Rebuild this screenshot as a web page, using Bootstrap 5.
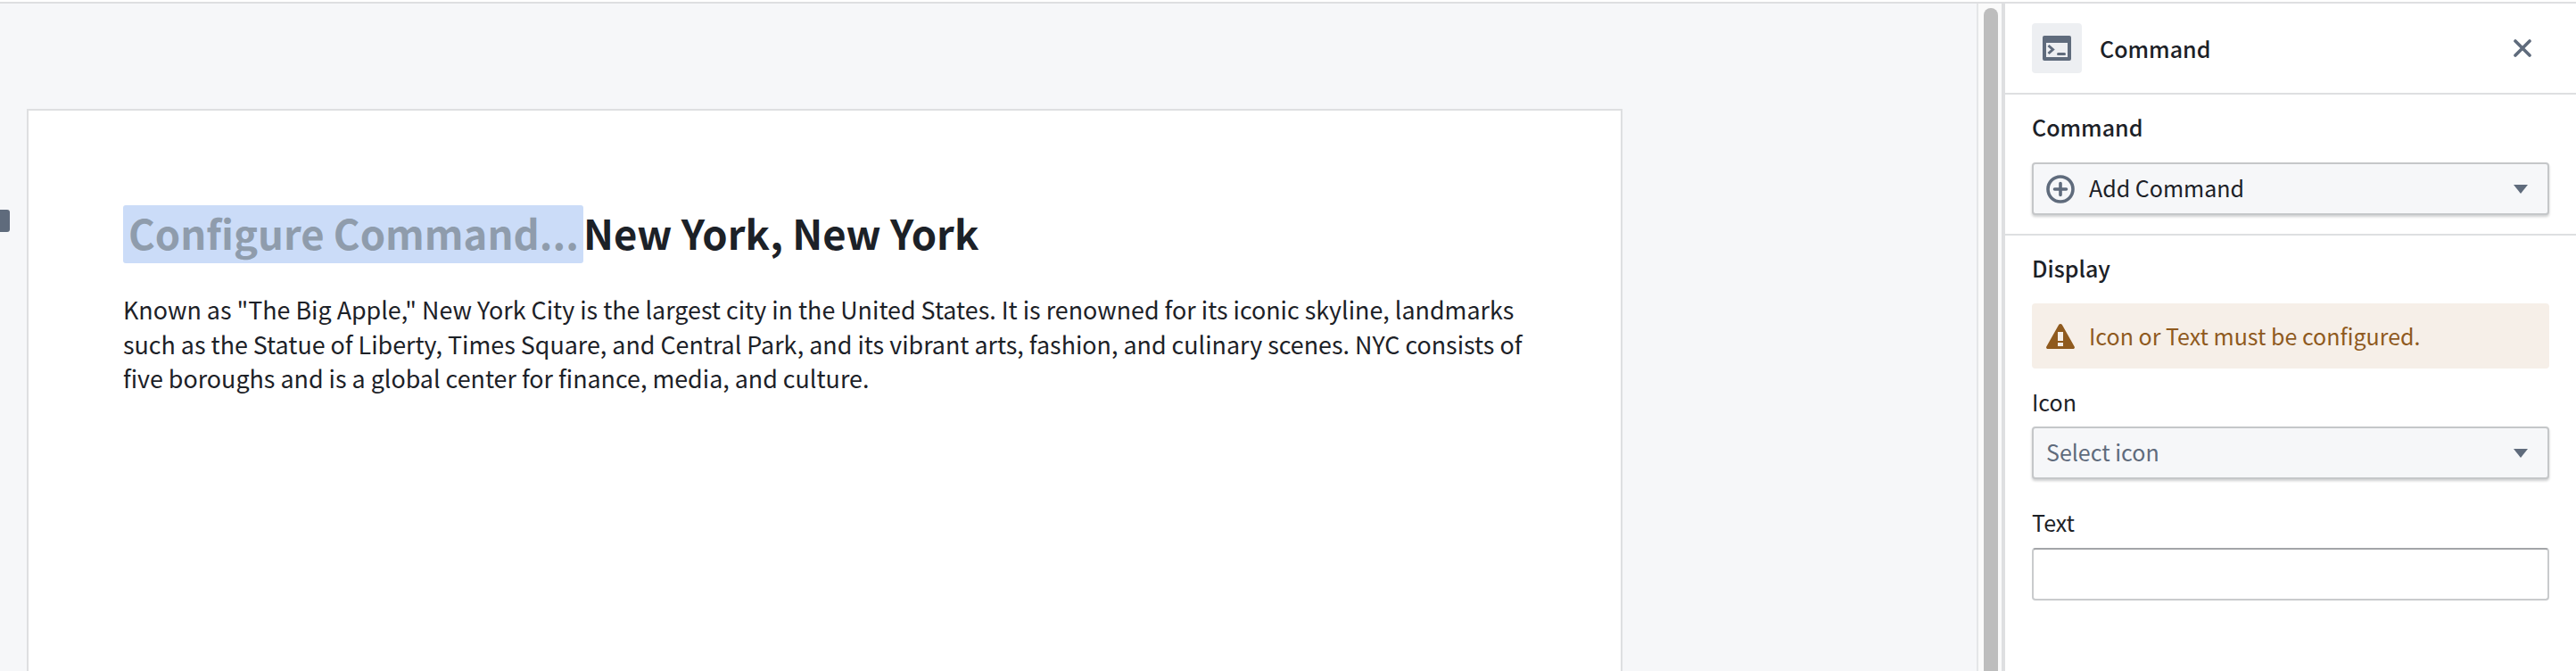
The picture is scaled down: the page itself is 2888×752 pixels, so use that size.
<!DOCTYPE html>
<html lang="en">
<head>
    <meta charset="UTF-8">
    <meta name="viewport" content="width=device-width, initial-scale=1.0">
    <title>Command</title>
    <link href="https://cdn.jsdelivr.net/npm/bootstrap@5.3.0/dist/css/bootstrap.min.css" rel="stylesheet">
    <style>
        html, body {
            height: 100%;
        }
        body {
            font-family: "Noto Sans CJK SC", "Noto Sans", sans-serif;
            color: #1c2127;
            background: #fff;
            overflow: hidden;
            padding-top: 2px;
        }
        .app-frame {
            height: 750px;
            border-top: 2px solid #dedfe1;
        }
        .doc-pane {
            width: 2218px;
            background: #f6f7f9;
            border-right: 2px solid #e5e6e8;
            padding: 118px 0 0 30px;
        }
        .doc-page {
            width: 1789px;
            height: 630px;
            background: #fff;
            border: 2px solid #dedfe1;
            border-bottom: 0;
            padding: 106px 106px 0;
        }
        .doc-title {
            font-size: 45.400px;
            font-weight: 700;
            line-height: 61px;
            margin: 0 0 33px;
            white-space: nowrap;
        }
        .cmd-chip {
            height: 65px;
            padding: 0 5px 0 6px;
            background: #cbdcf8;
            color: #8f9cac;
            border-radius: 3px;
        }
        .doc-text {
            font-size: 26.850px;
            line-height: 38.700px;
            margin: 0;
            white-space: nowrap;
        }
        .side-handle {
            position: absolute;
            left: 0;
            top: 231px;
            width: 11px;
            height: 25px;
            background: #5f6b7c;
            border-radius: 0 3px 3px 0;
        }
        .scroll-gutter {
            width: 30px;
            background: #fafafa;
            border-right: 4px solid #dedfe1;
            padding: 5px 4px 0 6px;
        }
        .scroll-thumb {
            width: 16px;
            height: 100%;
            background: #bdbdbd;
            border-radius: 8px 8px 0 0;
        }
        .side-panel {
            width: 640px;
            background: #fff;
            font-size: 25px;
            line-height: 34px;
        }
        .panel-head {
            height: 102px;
            padding: 0 50px 0 30px;
            border-bottom: 2px solid #dedfe1;
        }
        .head-icon {
            width: 56px;
            height: 56px;
            background: #edeff2;
            border-radius: 4px;
        }
        .head-title {
            font-weight: 500;
            margin-left: 20px;
            padding-bottom: 1px;
        }
        .panel-block {
            padding: 21px 30px 21px 30px;
        }
        .block-rule {
            border-bottom: 2px solid #dedfe1;
        }
        .block-label {
            font-weight: 500;
            height: 36px;
            line-height: 30px;
            margin-bottom: 19px;
        }
        .pick-btn {
            width: 580px;
            height: 59px;
            padding: 0 22px 0 14px;
            font-size: 25px;
            line-height: 34px;
            color: #1c2127;
            background: #f6f7f9;
            border: 2px solid #c5c7c9;
            border-radius: 4px;
            box-shadow: 0 2px 3px rgba(17, 20, 24, .2);
        }
        .pick-caption {
            padding-bottom: 3px;
        }
        .pick-placeholder {
            color: #5f6b7c;
        }
        .warn-box {
            height: 73px;
            margin: 0 0 22px;
            padding: 0 16px;
            background: #f6efe8;
            color: #8f5a1e;
            border: 0;
            border-radius: 4px;
        }
        .warn-text {
            padding-bottom: 1px;
        }
        .field-label {
            height: 36px;
            line-height: 31px;
            margin-bottom: 7px;
        }
        .field-gap {
            margin-top: 33px;
            margin-bottom: 8px;
        }
        .text-field {
            width: 580px;
            height: 59px;
            font-size: 25px;
            border: 2px solid #c9cbcd;
            border-top-color: #a3a5a8;
            border-radius: 4px;
            box-shadow: none;
        }
    </style>
</head>
<body>

<div class="app-frame d-flex position-relative">
    <div class="side-handle"></div>

    <main class="doc-pane">
        <div class="doc-page">
            <h1 class="doc-title d-flex align-items-start"><span class="cmd-chip">Configure Command...</span><span>New York, New York</span></h1>
            <p class="doc-text">Known as "The Big Apple," New York City is the largest city in the United States. It is renowned for its iconic skyline, landmarks<br>such as the Statue of Liberty, Times Square, and Central Park, and its vibrant arts, fashion, and culinary scenes. NYC consists of<br>five boroughs and is a global center for finance, media, and culture.</p>
        </div>
    </main>

    <div class="scroll-gutter"><div class="scroll-thumb"></div></div>

    <aside class="side-panel">
        <div class="panel-head d-flex align-items-center">
            <div class="head-icon d-flex align-items-center justify-content-center">
                <svg width="32" height="28" viewBox="0 0 32 28"><path fill="#5f6b7c" fill-rule="evenodd" d="M2 0h28a2 2 0 0 1 2 2v24a2 2 0 0 1-2 2H2a2 2 0 0 1-2-2V2a2 2 0 0 1 2-2zm2 8v16h24V8z"/><path fill="none" stroke="#5f6b7c" stroke-width="3" d="M6.500 11l5 4.500-5 4.500"/><rect x="16" y="19" width="10" height="3" rx="1.500" fill="#5f6b7c"/></svg>
            </div>
            <div class="head-title flex-grow-1">Command</div>
            <svg width="20" height="20" viewBox="0 0 20 20"><path stroke="#5f6b7c" stroke-width="3.600" stroke-linecap="round" d="M2 2l16 16M18 2L2 18"/></svg>
        </div>

        <div class="panel-block block-rule">
            <div class="block-label">Command</div>
            <button type="button" class="btn pick-btn d-flex align-items-center">
                <svg class="me-3" width="32" height="32" viewBox="0 0 32 32"><circle cx="16" cy="16" r="14" fill="none" stroke="#5f6b7c" stroke-width="3.600"/><path stroke="#5f6b7c" stroke-width="3.600" stroke-linecap="round" d="M16 9.500v13M9.500 16h13"/></svg>
                <span class="pick-caption flex-grow-1 text-start">Add Command</span>
                <svg width="16" height="10" viewBox="0 0 16 10"><path fill="#5f6b7c" d="M0 0h16L8 10z"/></svg>
            </button>
        </div>

        <div class="panel-block">
            <div class="block-label">Display</div>
            <div class="alert warn-box d-flex align-items-center" role="alert">
                <svg class="me-3" width="32" height="28" viewBox="0 0 32 28"><path fill="#8f5a1e" fill-rule="evenodd" d="M16 0c.8 0 1.500.4 1.900 1.100l13.800 24.500c.7 1.200-.2 2.400-1.500 2.400H1.800C.500 28-.4 26.800.300 25.600L14.100 1.100C14.500.4 15.200 0 16 0zm-3 9v10h6V9zm0 12v4h6v-4z"/></svg>
                <span class="warn-text">Icon or Text must be configured.</span>
            </div>
            <div class="field-label">Icon</div>
            <button type="button" class="btn pick-btn d-flex align-items-center">
                <span class="pick-caption pick-placeholder flex-grow-1 text-start">Select icon</span>
                <svg width="16" height="10" viewBox="0 0 16 10"><path fill="#5f6b7c" d="M0 0h16L8 10z"/></svg>
            </button>
            <div class="field-label field-gap">Text</div>
            <input type="text" class="form-control text-field">
        </div>
    </aside>
</div>

<script src="https://cdn.jsdelivr.net/npm/bootstrap@5.3.0/dist/js/bootstrap.bundle.min.js"></script>
</body>
</html>
